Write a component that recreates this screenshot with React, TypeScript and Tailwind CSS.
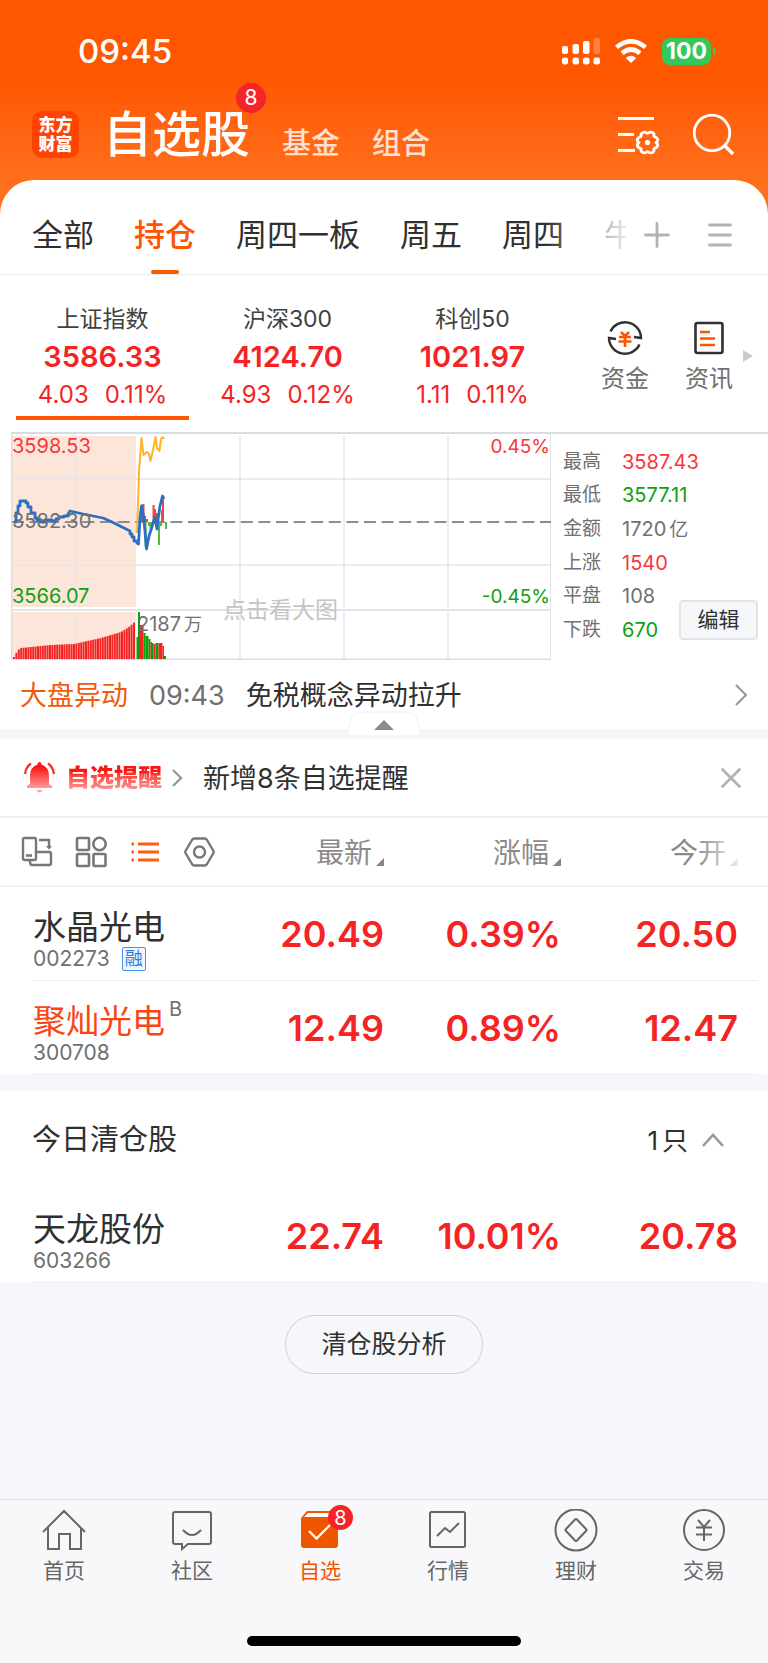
import React from 'react';

interface Stock {
  name: string;
  code: string;
  price: string;
  change: string;
  open: string;
  margin?: boolean;
  mark?: string;
  highlight?: boolean;
}

const groups = [
  { name: '全部' },
  { name: '持仓', active: true },
  { name: '周四一板' },
  { name: '周五' },
  { name: '周四' },
  { name: '牛' },
];

const indices = [
  { name: '上证指数', value: '3586.33', diff: '4.03', pct: '0.11%', active: true },
  { name: '沪深300', value: '4124.70', diff: '4.93', pct: '0.12%' },
  { name: '科创50', value: '1021.97', diff: '1.11', pct: '0.11%' },
];

const stats = [
  { label: '最高', value: '3587.43', color: 'text-[#f7373a]' },
  { label: '最低', value: '3577.11', color: 'text-[#0fa00f]' },
  { label: '金额', value: '1720', unit: '亿', color: 'text-[#707070]' },
  { label: '上涨', value: '1540', color: 'text-[#f7373a]' },
  { label: '平盘', value: '108', color: 'text-[#707070]' },
  { label: '下跌', value: '670', color: 'text-[#0fa00f]' },
];

const holdings: Stock[] = [
  { name: '水晶光电', code: '002273', price: '20.49', change: '0.39%', open: '20.50', margin: true },
  { name: '聚灿光电', code: '300708', price: '12.49', change: '0.89%', open: '12.47', mark: 'B', highlight: true },
];

const cleared: Stock[] = [
  { name: '天龙股份', code: '603266', price: '22.74', change: '10.01%', open: '20.78' },
];

// [x, height] anchors of the pre-market volume curve
const volumeAnchors = [[13, 2], [17, 9], [20, 11], [50, 14], [73, 15], [100, 21], [120, 27], [128, 32], [136, 39]];

const preMarket = Array.from({ length: 51 }, (_, i) => {
  const x = 13 + i * 2.4;
  const n = volumeAnchors.findIndex((a) => a[0] > x);
  const [x0, h0] = volumeAnchors[n - 1];
  const [x1, h1] = volumeAnchors[n];
  return { x, h: h0 + ((h1 - h0) * (x - x0)) / (x1 - x0) };
});

const RED = '#f52424';
const GREEN = '#0aa00a';

const trading = [
  { x: 136.5, w: 2, h: 22, c: GREEN },
  { x: 138, w: 2, h: 47, c: GREEN },
  { x: 140, w: 3.5, h: 34, c: RED },
  { x: 143.5, w: 2, h: 26, c: GREEN },
  { x: 145.5, w: 3, h: 23, c: GREEN },
  { x: 148.5, w: 2, h: 20, c: GREEN },
  { x: 150.5, w: 1.5, h: 17, c: RED },
  { x: 152, w: 1.5, h: 16, c: GREEN },
  { x: 153.5, w: 2, h: 15, c: RED },
  { x: 155.5, w: 3, h: 16, c: GREEN },
  { x: 158.5, w: 4, h: 16, c: RED },
  { x: 162.5, w: 1.5, h: 13, c: RED },
  { x: 164, w: 2, h: 3, c: GREEN },
];

const momentum = [
  [140, -12], [141, -17], [142.5, -18], [144, -6], [146, -3], [152.5, -17], [154, -13], [156, -9], [161, -12], [162, -26],
  [144.5, 25], [148, 4], [149.5, 7], [151, 4], [158, 23], [160, 4], [165, 7],
];

const IndexChart: React.FC = () => (
  <svg viewBox="11 432 540 228" className="block w-full" role="img" aria-label="上证指数分时图">
    <rect x="12" y="436" width="124" height="171" fill="#fce6da" />
    <rect x="12" y="612" width="124" height="47" fill="#fce6da" />
    <g stroke="#e2e5ee" strokeWidth="1.3">
      <path d="M12 479H551M12 565H551" />
      <path d="M75 435V607M240 435V607M344 435V607M448 435V607M75 612V659M240 612V659M344 612V659M448 612V659" />
    </g>
    <path d="M12 610H551M12 659.3H551M11.5 432V660M551 432V660" stroke="#dadce3" strokeWidth="1.5" />
    <path d="M12 522H551" stroke="#8d8d8d" strokeWidth="1.8" strokeDasharray="12 5.6" />
    {momentum.map(([x, h]) => (
      <rect key={x} x={x} y={h < 0 ? 522 + h : 522} width="2" height={Math.abs(h)} fill={h < 0 ? '#ee4449' : '#55b83c'} />
    ))}
    <g fill="none" strokeLinejoin="round">
      <path
        d="M137 533L139 472L141.5 438L143.5 455L147 452L149 454L150.5 461L153 450L155.5 437L157 448L159.5 451L161 439L162.5 437L164 439"
        stroke="#fdb528"
        strokeWidth="2"
      />
      <path
        d="M14 522H16V513H18V506H20V501H26V503H28V507H31V513H35V518H37V520H41V522H46V520H52V521H56V519H59V517H64V516H68V514L70 511L83 514L93 516L103 518L112 522L120 526L128 530L130 531V534H132V537H134V541H137V543L138.5 544L140 518L141.5 506L143.5 516L145 531L146.5 549L149 536L151 530L155 517L157 529L158 520L160 506L162.5 496L164 499"
        stroke="#2c6fc3"
        strokeWidth="2.8"
      />
    </g>
    {preMarket.map((b) => (
      <rect key={b.x} x={b.x} y={659 - b.h} width="2" height={b.h} fill={RED} />
    ))}
    {trading.map((b) => (
      <rect key={b.x} x={b.x} y={659 - b.h} width={b.w} height={b.h} fill={b.c} />
    ))}
    <g fontSize="20">
      <text x="12" y="453" fill="#f7373a">3598.53</text>
      <text x="12" y="528" fill="#707070">3582.30</text>
      <text x="12" y="603" fill="#0fa00f">3566.07</text>
      <text x="550" y="453" textAnchor="end" fontSize="19" fill="#f7373a">0.45%</text>
      <text x="550" y="603" textAnchor="end" fontSize="19" fill="#0fa00f">-0.45%</text>
      <text x="137" y="631" fill="#707070">2187<tspan dx="3" fontSize="18">万</tspan></text>
    </g>
    <text x="223" y="618" fontSize="23" fill="#c4c4c6">点击看大图</text>
  </svg>
);

const SortMark: React.FC = () => (
  <svg viewBox="0 0 8 8" className="mb-2 ml-1 size-2" fill="#85868c">
    <path d="M8 0V8H0Z" />
  </svg>
);

const StockRow: React.FC<{ stock: Stock }> = ({ stock }) => (
  <tr className="mr-[10px] ml-8 flex h-[94px] items-center border-b border-[#ededf0] pr-5 text-right text-4xl font-semibold text-[#f52424]">
    <th scope="row" className="flex-1 pt-[10px] pl-px text-left font-normal">
      <div className="flex text-[33px] leading-[40px]">
        <span className={stock.highlight ? 'text-[#fa4512]' : 'text-[#303030]'}>{stock.name}</span>
        {stock.mark && <sup className="top-0 ml-1 text-xl leading-4 text-[#707070]">{stock.mark}</sup>}
      </div>
      <div className="flex items-center gap-3 text-[21px] leading-6 text-[#707070]">
        {stock.code}
        {stock.margin && (
          <span className="flex size-6 items-center justify-center rounded-xs border border-[#4a90e2] bg-[#f0f7ff] text-lg text-[#2f80dd]">融</span>
        )}
      </div>
    </th>
    <td className="w-[120px]">{stock.price}</td>
    <td className="w-[177px]">{stock.change}</td>
    <td className="w-[177px]">{stock.open}</td>
  </tr>
);

const navIcons: Record<string, React.ReactNode> = {
  首页: <path d="M1 23L22 2L43 23M6 19V40H17V25H28V40H39V19" />,
  社区: <path d="M5 3H39Q41 3 41 5V33Q41 35 39 35H18L12 40V35H5Q3 35 3 33V5Q3 3 5 3ZM13 21Q22 31 31 21" />,
  行情: (
    <>
      <rect x="4" y="3" width="35" height="35" rx="1.5" />
      <path d="M11 27L19 19L24 23L33 14" />
    </>
  ),
  理财: (
    <>
      <circle cx="22" cy="21" r="20.5" />
      <path d="M21 10.5Q22 9.5 23 10.5L32 20Q33 21 32 22L23 31.5Q22 32.5 21 31.5L12 22Q11 21 12 20Z" />
    </>
  ),
  交易: (
    <>
      <circle cx="22" cy="21" r="20" />
      <path d="M16 11L22 18L28 11M14 18.5H30M14 25.5H30M22 18V32" />
    </>
  ),
};

const tabs = ['首页', '社区', '自选', '行情', '理财', '交易'];

export default function App() {
  return (
    <div className="flex min-h-screen flex-col bg-[#f6f7fa] font-[Inter,'Noto_Sans_CJK_SC',sans-serif] text-[#303030]">
      <header className="bg-linear-to-b from-[#ff5600] from-35% to-[#ff701c] to-85% pb-9 text-white">
        <div className="flex h-[102px] items-center pr-[52px] pl-[78px]">
          <time className="flex-1 pt-0.5 text-[33px] font-medium">09:45</time>
          <svg width="38" height="27" viewBox="0 0 38 27" fill="#fff">
            <rect x="0" y="8" width="6" height="8" rx="2" />
            <rect x="10.5" y="6" width="6.5" height="10" rx="2" />
            <rect x="21" y="3" width="6.5" height="13" rx="2" />
            <rect x="31.5" y="0" width="6.5" height="16" rx="2" opacity=".25" />
            <rect x="0" y="19.5" width="6" height="7" rx="2.2" />
            <rect x="10.5" y="19.5" width="6.5" height="7" rx="2.2" />
            <rect x="21" y="19.5" width="6.5" height="7" rx="2.2" />
            <rect x="31.5" y="19.5" width="6.5" height="7" rx="2.2" />
          </svg>
          <svg className="ml-[15px]" width="32" height="24" viewBox="0 0 32 24" fill="none" stroke="#fff" strokeWidth="4.6">
            <path d="M1.5 8.3Q16 -3.7 30.5 8.3" />
            <path d="M7 14.2Q16 6.8 25 14.2" />
            <path d="M16 24L10.8 18.9Q16 14.6 21.2 18.9Z" fill="#fff" stroke="none" />
          </svg>
          <div className="ml-[15px] flex items-center gap-0.5">
            <span className="flex h-[27px] w-[49px] items-center justify-center rounded-lg bg-[#34c759] text-[23px] font-bold">100</span>
            <span className="h-2 w-[3px] rounded-r-full bg-[#34c759]" />
          </div>
        </div>

        <div className="flex h-[78px] items-end pr-[33px] pb-[22px] pl-8">
          <div className="flex size-[47px] flex-col items-center justify-center rounded-[10px] bg-[#ff4300] text-[17px] leading-[19px] font-black">
            <span>东方</span>
            <span>财富</span>
          </div>
          <nav className="-mb-px ml-6 flex flex-1 items-end gap-8 text-[29px] leading-[30px] font-medium text-[#ffe0d0]">
            <a href="#watch" className="relative text-[49px] leading-[48px] text-white">
              自选股
              <span className="absolute -top-[28px] -right-4 flex size-[30px] items-center justify-center rounded-full bg-[#f42428] text-[21px] font-normal">8</span>
            </a>
            <a href="#funds">基金</a>
            <a href="#portfolio">组合</a>
          </nav>
          <button aria-label="列表设置" className="mr-[33px]">
            <svg width="43" height="42" viewBox="0 0 43 42" fill="none" stroke="#fff" strokeWidth="2.8">
              <path d="M1 2.5H37M1 18.5H17M1 34.5H18" />
              <path
                d="M26 16.5Q28 15.5 30.5 17.5Q33 15.5 35.5 16.5Q37.5 17.5 37 20.5Q40.5 21.5 40.8 24Q40.5 26 39 26.5Q40.5 27.5 40.8 29Q40.5 31.5 37 32.5Q37.5 35.5 35.5 36.5Q33 37.5 30.5 35.5Q28 37.5 26 36.5Q23.5 35.5 24 32.5Q20.5 31.5 20.2 29Q20.5 27.5 22 26.5Q20.5 26 20.2 24Q20.5 21.5 24 20.5Q23.5 17.5 26 16.5Z"
                strokeLinejoin="round"
              />
              <circle cx="30.5" cy="26.5" r="2.6" fill="#fff" stroke="none" />
            </svg>
          </button>
          <button aria-label="搜索">
            <svg width="42" height="44" viewBox="0 0 42 44" fill="none" stroke="#fff" strokeWidth="2.8">
              <circle cx="19" cy="19" r="17.8" />
              <path d="M31 31L40 40" strokeWidth="3.4" />
            </svg>
          </button>
        </div>
      </header>

      <main className="-mt-9 flex-1">
        <section className="rounded-t-[34px] bg-white">
          <div className="flex h-[95px] items-center border-b border-[#ededf0] pt-4 pr-9 pl-8">
            <nav className="relative flex w-[594px] gap-10 overflow-hidden text-[31px] leading-[78px] whitespace-nowrap">
              {groups.map((g) => (
                <a
                  key={g.name}
                  href={`#${g.name}`}
                  className={g.active ? 'relative font-medium text-[#ff5400]' : undefined}
                >
                  {g.name}
                  {g.active && <span className="absolute bottom-0 left-1/2 h-1 w-7 -translate-x-1/2 rounded-full bg-[#ff5400]" />}
                </a>
              ))}
              <span className="absolute inset-y-0 right-0 w-20 bg-linear-to-l from-white/90 to-white/0" />
            </nav>
            <div className="flex flex-1 items-center justify-end gap-[38px]">
              <button aria-label="添加分组">
                <svg width="26" height="26" viewBox="0 0 26 26" stroke="#b2b2b2" strokeWidth="2.8" strokeLinecap="round">
                  <path d="M13 1.5V24.5M1.5 13H24.5" />
                </svg>
              </button>
              <button aria-label="分组菜单">
                <svg width="24" height="26" viewBox="0 0 24 26" stroke="#b2b2b2" strokeWidth="2.8" strokeLinecap="round">
                  <path d="M1.5 3H22.5M1.5 13H22.5M1.5 23H22.5" />
                </svg>
              </button>
            </div>
          </div>

          <div className="flex h-[157px] pr-[15px] pl-[10px]">
            {indices.map((item) => (
              <button key={item.name} className="relative flex w-[185px] flex-col items-center pt-7 text-[#f52424]">
                <span className="text-[23px] leading-[32px] text-[#404040]">{item.name}</span>
                <span className="text-[29px] leading-[44px] font-semibold">{item.value}</span>
                <span className="flex gap-4 text-2xl leading-[32px]">
                  <span>{item.diff}</span>
                  <span>{item.pct}</span>
                </span>
                {item.active && <span className="absolute inset-x-[6px] bottom-3 h-1 bg-[#ff5400]" />}
              </button>
            ))}
            <div className="flex flex-1 items-start justify-end pt-[45px] text-2xl leading-[34px] text-[#707070]">
              <button className="mr-9 flex flex-col items-center gap-[6px]">
                <svg width="36" height="36" viewBox="0 0 36 36" fill="none" stroke="#303030" strokeWidth="2.4">
                  <path d="M3.5 11.5A16 16 0 0 1 34 18L27 17M32.5 24.5A16 16 0 0 1 2 18L9 19" />
                  <path d="M14 12L18 16L22 12M12 17H24M11.5 21.5H24.5M18 16V27" stroke="#ff5400" strokeWidth="2.6" />
                </svg>
                <span>资金</span>
              </button>
              <button className="mr-[10px] flex flex-col items-center gap-[6px]">
                <svg width="36" height="36" viewBox="0 0 36 36" fill="none" stroke="#303030" strokeWidth="2.6">
                  <rect x="4.5" y="3" width="27" height="30" rx="2" />
                  <path d="M9 12H19M9 18.5H24M9 25H24" stroke="#ff5400" strokeWidth="2.6" />
                </svg>
                <span>资讯</span>
              </button>
              <svg className="mt-[30px]" width="10" height="12" viewBox="0 0 10 12" fill="#cbcbcb">
                <path d="M0 0L10 6L0 12Z" />
              </svg>
            </div>
          </div>

          <div className="ml-[11px] flex border-t-2 border-[#dadce3]">
            <div className="-mt-0.5 flex-1">
              <IndexChart />
            </div>
            <div className="relative w-[217px] pt-[11px] pl-3 text-xl">
              <dl className="grid h-[202px] grid-rows-6">
                {stats.map((s) => (
                  <div key={s.label} className="flex items-center">
                    <dt className="w-[59px] text-[19px] text-[#707070]">{s.label}</dt>
                    <dd className={s.color}>
                      {s.value}
                      {s.unit && <span className="ml-[3px] text-[19px]">{s.unit}</span>}
                    </dd>
                  </div>
                ))}
              </dl>
              <button className="absolute right-[10px] bottom-5 h-10 w-[79px] rounded-sm border-2 border-[#e2e4ea] bg-[#f6f7fa] text-[21px] leading-8">
                编辑
              </button>
            </div>
          </div>

          <div className="relative flex h-[69px] items-center pt-1 pr-[21px] pl-5 text-[27px]">
            <span className="text-[#f25a0a]">大盘异动</span>
            <time className="ml-[21px] text-[#707070]">09:43</time>
            <a href="#news" className="ml-[21px] flex flex-1 items-center justify-between">
              免税概念异动拉升
              <svg className="mb-1" width="12" height="22" viewBox="0 0 12 22" fill="none" stroke="#999" strokeWidth="2.2">
                <path d="M1 1L11 11L1 21" />
              </svg>
            </a>
            <button aria-label="收起" className="absolute -bottom-2 left-1/2 -translate-x-1/2">
              <svg width="76" height="26" viewBox="0 0 76 26" className="block">
                <path d="M1 25L5 9Q7 1 15 1H61Q69 1 71 9L75 25Z" fill="#fff" stroke="#f0f1f4" />
                <path d="M38 9L48 19H28Z" fill="#8c8c8c" />
              </svg>
            </button>
          </div>
        </section>

        <section className="mt-[10px] bg-white">
          <div className="flex h-[79px] items-center border-b-2 border-[#f2f2f4] pr-[27px] pl-[23px]">
            <svg width="32" height="32" viewBox="0 0 32 32" fill="none">
              <defs>
                <linearGradient id="bell" x1="0" y1="0" x2="0" y2="1">
                  <stop offset=".2" stopColor="#fc1515" />
                  <stop offset="1" stopColor="#ff9b9b" />
                </linearGradient>
              </defs>
              <path d="M16.5 0Q18.5 0 18.5 2.500Q26 5 26 14V22L29 24V26H4V24L7 22V14Q7 5 14.500 2.500Q14.500 0 16.500 0Z" fill="url(#bell)" />
              <path d="M13.5 28H19.5Q18.5 30.5 16.5 30.5Q14.5 30.5 13.5 28Z" fill="#ffa5a5" />
              <path d="M2 12Q3 5 8 1.5M31 12Q30 5 25 1.5" stroke="#fc2a2a" strokeWidth="2.2" />
            </svg>
            <strong className="ml-[11px] bg-linear-to-b from-[#fc1515] from-30% to-[#ff8f8f] to-85% bg-clip-text text-2xl font-black text-transparent">
              自选提醒
            </strong>
            <svg className="ml-[10px]" width="11" height="18" viewBox="0 0 11 18" fill="none" stroke="#999" strokeWidth="2.4">
              <path d="M1 1L9 9L1 17" />
            </svg>
            <a href="#alerts" className="ml-5 flex-1 pt-1 text-[27px]">新增8条自选提醒</a>
            <button aria-label="关闭">
              <svg width="20" height="20" viewBox="0 0 20 20" stroke="#b2b2b2" strokeWidth="2.8" strokeLinecap="round">
                <path d="M1.5 1.5L18.5 18.5M18.5 1.5L1.5 18.5" />
              </svg>
            </button>
          </div>

          <table className="block">
            <thead className="block">
              <tr className="relative flex h-[69px] items-center border-b-2 border-[#f2f2f4] pr-[30px] pl-[21px] text-[28px] text-[#8a8a8a]">
                <td className="flex flex-1 gap-[22px] text-[#777]">
                  <button aria-label="横屏">
                    <svg width="32" height="32" viewBox="0 0 32 32" fill="none" stroke="currentColor" strokeWidth="2.4">
                      <rect x="2" y="2" width="13" height="22" rx="1.5" />
                      <path d="M9 24V26Q9 29 11 29H28Q30 29 30 27V18Q30 16 28 16H15M5 19.5H11M18 4H28V12" />
                      <path d="M25 10H31L28 13.5Z" fill="currentColor" stroke="none" />
                    </svg>
                  </button>
                  <button aria-label="宫格">
                    <svg width="32" height="32" viewBox="0 0 32 32" fill="none" stroke="currentColor" strokeWidth="2.6">
                      <rect x="2" y="2" width="12" height="12" rx="1" />
                      <circle cx="24.5" cy="8" r="6.2" />
                      <rect x="2" y="18" width="12" height="12" rx="1" />
                      <rect x="18.5" y="18" width="12" height="12" rx="1" />
                    </svg>
                  </button>
                  <button aria-label="列表" className="text-[#ff5f0f]">
                    <svg width="32" height="32" viewBox="0 0 32 32" stroke="currentColor" strokeWidth="2.8">
                      <path d="M2.500 8H5M2.500 16H5M2.500 24H5M9 8H30M9 16H30M9 24H30" />
                    </svg>
                  </button>
                  <button aria-label="设置">
                    <svg width="32" height="32" viewBox="0 0 32 32" fill="none" stroke="currentColor" strokeWidth="2.4" strokeLinejoin="round">
                      <path d="M11 2.5H22Q23 2.5 24 4L30.5 15Q31 16 30.5 17L24 28Q23 29.5 22 29.5H11Q10 29.5 9 28L2.5 17Q2 16 2.5 15L9 4Q10 2.5 11 2.5Z" />
                      <circle cx="16.5" cy="16" r="5.5" />
                    </svg>
                  </button>
                </td>
                <th scope="col" className="w-[120px] pt-[3px] font-normal">
                  <button className="flex w-full items-end justify-end">最新<SortMark /></button>
                </th>
                <th scope="col" className="w-[177px] pt-[3px] font-normal">
                  <button className="flex w-full items-end justify-end">涨幅<SortMark /></button>
                </th>
                <th scope="col" className="w-[177px] pt-[3px] font-normal">
                  <button className="flex w-full items-end justify-end">今开<SortMark /></button>
                  <span className="pointer-events-none absolute inset-y-0 right-0 w-[72px] bg-linear-to-l from-white from-30% to-white/0" />
                </th>
              </tr>
            </thead>
            <tbody className="block">
              {holdings.map((s) => <StockRow key={s.code} stock={s} />)}
            </tbody>
          </table>
        </section>

        <section className="mt-4 bg-white">
          <div className="flex h-[98px] items-center justify-between pr-[44px] pl-8">
            <h2 className="text-[29px]">今日清仓股</h2>
            <button className="flex items-center gap-[14px] text-[26px]">
              <span>1<span className="ml-1">只</span></span>
              <svg width="22" height="14" viewBox="0 0 22 14" fill="none" stroke="#999" strokeWidth="2.6">
                <path d="M1 13L11 2L21 13" />
              </svg>
            </button>
          </div>
          <table className="block">
            <tbody className="block">
              {cleared.map((s) => <StockRow key={s.code} stock={s} />)}
            </tbody>
          </table>
        </section>

        <div className="flex justify-center pt-8">
          <button className="h-[59px] rounded-full border border-[#cfcfd2] px-[35px] text-[25px]">清仓股分析</button>
        </div>
      </main>

      <footer className="border-t border-[#dfdfe2] bg-[#f8f8fb]">
        <nav className="flex h-[94px] text-[21px] leading-7 text-[#666]">
          {tabs.map((t) => (
            <a
              key={t}
              href={`#${t}`}
              className={`flex flex-1 flex-col items-center pt-[9px] ${t === '自选' ? 'text-[#f25500]' : ''}`}
            >
              {t === '自选' ? (
                <span className="relative">
                  <svg width="44" height="44" viewBox="0 0 44 44" className="block">
                    <path d="M9 2H37Q40 2 40 5V36Q40 39 37 39H6Q3 39 3 36V9Z" fill="#f05500" />
                    <path d="M10 4H37V8H6Z" fill="#fff" />
                    <path d="M11 22L18.5 29.5L32 16" fill="none" stroke="#fff" strokeWidth="2.4" />
                  </svg>
                  <span className="absolute -top-1 -right-[11px] flex size-[25px] items-center justify-center rounded-full bg-[#f42428] text-xl text-white">8</span>
                </span>
              ) : (
                <svg width="44" height="44" viewBox="0 0 44 44" className="block" fill="none" stroke="currentColor" strokeWidth="2">
                  {navIcons[t]}
                </svg>
              )}
              <span className="mt-1">{t}</span>
            </a>
          ))}
        </nav>
        <div className="mx-auto mt-[42px] mb-[17px] h-[10px] w-[274px] rounded-full bg-black" />
      </footer>
    </div>
  );
}
